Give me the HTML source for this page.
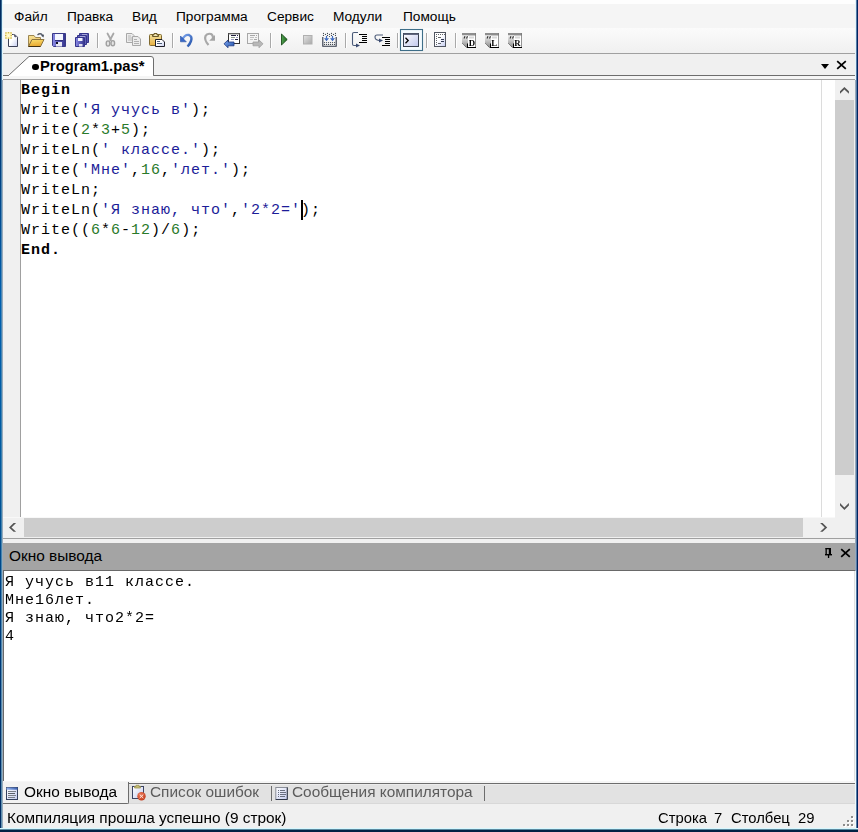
<!DOCTYPE html>
<html><head><meta charset="utf-8">
<style>
*{margin:0;padding:0;box-sizing:border-box}
html,body{width:858px;height:832px;overflow:hidden;background:#fff}
body{position:relative;font-family:"Liberation Sans",sans-serif;color:#000}
.a{position:absolute}
.ui{font-family:"Liberation Sans",sans-serif;font-size:13.7px;line-height:16px;white-space:pre;color:#000}
.p{font-size:15.4px;line-height:18px}
.mono{font-family:"Liberation Mono",monospace;font-size:15px;letter-spacing:1px;line-height:20px;white-space:pre}
.b{font-weight:bold}
.s{color:#1c1c98}
.n{color:#2a7a2a}
svg{position:absolute;overflow:visible}
</style></head><body>

<!-- top strip -->
<div class="a" style="left:0;top:0;width:858px;height:4px;background:#fefefe"></div>
<!-- menu bar -->
<div class="a" style="left:0;top:4px;width:858px;height:24px;background:#f5f5f5"></div>
<div class="a ui" style="left:14px;top:9px">Файл</div>
<div class="a ui" style="left:67px;top:9px">Правка</div>
<div class="a ui" style="left:132px;top:9px">Вид</div>
<div class="a ui" style="left:176px;top:9px">Программа</div>
<div class="a ui" style="left:267px;top:9px">Сервис</div>
<div class="a ui" style="left:333px;top:9px">Модули</div>
<div class="a ui" style="left:403px;top:9px">Помощь</div>

<!-- toolbar -->
<div class="a" style="left:0;top:28px;width:858px;height:25px;background:linear-gradient(#fbfbfb,#f0f0f0)"></div>
<svg width="858" height="54" style="left:0;top:0;will-change:transform">
<defs>
<linearGradient id="gPage" x1="0" y1="0" x2="1" y2="1"><stop offset="0" stop-color="#ffffff"/><stop offset="0.45" stop-color="#ffffff"/><stop offset="1" stop-color="#c4ccf0"/></linearGradient>
<linearGradient id="gFold" x1="0" y1="0" x2="0.3" y2="1"><stop offset="0" stop-color="#f8e49a"/><stop offset="1" stop-color="#eec060"/></linearGradient>
<linearGradient id="gFront" x1="0" y1="0" x2="0.2" y2="1"><stop offset="0" stop-color="#fae070"/><stop offset="1" stop-color="#e8a830"/></linearGradient>
<linearGradient id="gDisk" x1="0" y1="0" x2="1" y2="0"><stop offset="0" stop-color="#8c8ce6"/><stop offset="0.5" stop-color="#5a5ab8"/><stop offset="1" stop-color="#34348a"/></linearGradient>
<linearGradient id="gClip" x1="0" y1="0" x2="0" y2="1"><stop offset="0" stop-color="#f0e0a0"/><stop offset="1" stop-color="#e8b040"/></linearGradient>
<linearGradient id="gBlue" x1="0" y1="0" x2="1" y2="1"><stop offset="0" stop-color="#80a8f0"/><stop offset="1" stop-color="#2050a8"/></linearGradient>
<linearGradient id="gGreen" x1="0" y1="0" x2="1" y2="0"><stop offset="0" stop-color="#50a050"/><stop offset="1" stop-color="#1e6a1e"/></linearGradient>
<linearGradient id="gStop" x1="0" y1="0" x2="1" y2="1"><stop offset="0" stop-color="#e4e4e4"/><stop offset="1" stop-color="#a8a8a8"/></linearGradient>
<linearGradient id="gWin" x1="0" y1="0" x2="1" y2="1"><stop offset="0" stop-color="#ffffff"/><stop offset="1" stop-color="#c0c8ee"/></linearGradient>
<linearGradient id="gDL" x1="0" y1="0" x2="0" y2="1"><stop offset="0" stop-color="#f0f0f0"/><stop offset="1" stop-color="#8c8c8c"/></linearGradient>
<g id="dlr">
<rect x="3" y="33" width="14" height="15" fill="#ffffff"/>
<rect x="3" y="33" width="14" height="2.5" fill="#8e8e8e"/>
<rect x="3" y="35.5" width="6" height="12" fill="url(#gDL)"/>
<rect x="10" y="36.5" width="5" height="2" fill="#d8d8d8"/>
<rect x="16.2" y="33" width="0.8" height="15" fill="#7a7a7a"/>
<rect x="8" y="47" width="9" height="1" fill="#000"/>
<rect x="8" y="43.5" width="1" height="4" fill="#000"/>
<path d="M3.3,43.3 L7.5,47.5" stroke="#000" stroke-width="1" stroke-dasharray="1,0.6"/>
<path d="M3,43 V48 H7.5 Z" fill="#f4f4f4"/>
<path d="M5,38.5 L6,36.2 M7.5,38.5 L8.5,36.2" stroke="#303030" stroke-width="1.1"/>
</g>
</defs>
<g fill="#a9a9a9">
<rect x="97" y="33" width="1" height="15"/><rect x="172" y="33" width="1" height="15"/><rect x="270" y="33" width="1" height="15"/>
<rect x="345" y="33" width="1" height="15"/><rect x="397" y="33" width="1" height="15"/><rect x="426" y="33" width="1" height="15"/><rect x="455" y="33" width="1" height="15"/>
</g>
<g fill="#ffffff">
<rect x="98" y="33" width="1" height="15"/><rect x="173" y="33" width="1" height="15"/><rect x="271" y="33" width="1" height="15"/>
<rect x="346" y="33" width="1" height="15"/><rect x="398" y="33" width="1" height="15"/><rect x="427" y="33" width="1" height="15"/><rect x="456" y="33" width="1" height="15"/>
</g>

<!-- New -->
<path d="M8.5,46.5 V34.5 H13.5 Q15.5,34.5 17.5,37.2 V46.5 Z" fill="url(#gPage)" stroke="#3c4056" stroke-width="1"/>
<path d="M14.3,35.3 L15.6,37.2" stroke="#3c4056" stroke-width="1.2"/>
<rect x="5" y="32" width="7" height="7" rx="1.5" fill="#fff6b8"/>
<g fill="#c4aa40"><rect x="5.3" y="32.3" width="1.3" height="1.3"/><rect x="7.9" y="32.1" width="1.2" height="1.2"/><rect x="10.4" y="32.3" width="1.3" height="1.3"/>
<rect x="5.1" y="34.9" width="1.2" height="1.2"/><rect x="10.6" y="34.9" width="1.2" height="1.2"/>
<rect x="5.3" y="37.4" width="1.3" height="1.3"/><rect x="7.9" y="37.6" width="1.2" height="1.2"/><rect x="10.4" y="37.4" width="1.3" height="1.3"/></g>
<rect x="7.5" y="34.5" width="2" height="2" fill="#fffbe0"/>

<!-- Open -->
<path d="M28.5,46.5 V35.5 H34 L35.5,37.5 H40.5 V39.5" fill="url(#gFold)" stroke="#9c8650" stroke-width="1"/>
<path d="M28.5,46.5 L32,39.5 H44 L40.5,46.5 Z" fill="url(#gFront)" stroke="#8c7440" stroke-width="1"/>
<path d="M28.5,46.5 H40.5" stroke="#403010" stroke-width="1"/>
<path d="M37.5,35 Q40,32.5 42.5,35" fill="none" stroke="#505868" stroke-width="1.2"/>
<path d="M41,35.5 L44,34.5 L43.5,37.5 Z" fill="#404858"/>

<!-- Save -->
<path d="M52.5,33.5 H65.5 V46.5 H53.5 L52.5,45.5 Z" fill="url(#gDisk)" stroke="#3a3a88" stroke-width="1"/>
<rect x="55" y="34" width="8" height="6" fill="#f4f6ff"/>
<rect x="55" y="40" width="8" height="1" fill="#30307a"/>
<rect x="56" y="42" width="6" height="4.5" fill="#e8e8f4"/>
<rect x="56" y="42" width="2" height="2" fill="#101020"/>

<!-- Save all -->
<path d="M79.5,33.5 H88.5 V42.5 H79.5 Z" fill="#5858b0" stroke="#34348a" stroke-width="1"/>
<rect x="82" y="34.5" width="5" height="1.2" fill="#f0f0ff"/>
<path d="M77.5,35.5 H86.5 V44.5 H77.5 Z" fill="#6060b8" stroke="#34348a" stroke-width="1"/>
<rect x="80" y="36.5" width="5" height="1.2" fill="#f0f0ff"/>
<path d="M75.5,37.5 H84.5 V46.5 H75.5 Z" fill="url(#gDisk)" stroke="#34348a" stroke-width="1"/>
<rect x="78" y="38" width="4.5" height="3" fill="#f4f6ff"/>
<rect x="79" y="44" width="3.5" height="2.5" fill="#e0e0f0"/>

<!-- Cut -->
<path d="M107.5,33.5 L111,40 M113.5,33.5 L110,40" stroke="#a8a8a8" stroke-width="1.8" stroke-linecap="round"/>
<ellipse cx="108" cy="43.5" rx="1.8" ry="2.6" fill="#e4e4e4" stroke="#a0a0a0" stroke-width="1.4"/>
<ellipse cx="112.8" cy="43.2" rx="1.8" ry="2.6" fill="#e4e4e4" stroke="#a0a0a0" stroke-width="1.4"/>

<!-- Copy -->
<path d="M126.5,33.5 H132 L134,35.5 V42.5 H126.5 Z" fill="#ececec" stroke="#a8a8a8" stroke-width="1"/>
<g fill="#b8b8b8"><rect x="128" y="35.5" width="3" height="1"/><rect x="128" y="37.5" width="4" height="1"/><rect x="128" y="39.5" width="4" height="1"/></g>
<path d="M132.5,36.5 H138 L140.5,39 V45.5 H132.5 Z" fill="#ececec" stroke="#a8a8a8" stroke-width="1"/>
<g fill="#b0b0b0"><rect x="134" y="39" width="3" height="1"/><rect x="134" y="41" width="5" height="1"/><rect x="134" y="43" width="5" height="1"/></g>

<!-- Paste -->
<rect x="149.5" y="34.5" width="12" height="11" rx="1" fill="url(#gClip)" stroke="#806a30" stroke-width="1"/>
<path d="M152.5,36.5 V35 H154 V33.5 H157 V35 H158.5 V36.5 Z" fill="#f0e4b0" stroke="#6a5828" stroke-width="1"/>
<path d="M155.5,39.5 H162 L164.5,42 V46.5 H155.5 Z" fill="url(#gPage)" stroke="#202028" stroke-width="1"/>
<g fill="#50607a"><rect x="157" y="41" width="3" height="1"/><rect x="157" y="43" width="5" height="1"/></g>

<!-- Undo -->
<path d="M182,40 Q185,34 189,35 Q192.5,36.5 191,41 Q190,44 187.5,46.5" fill="none" stroke="url(#gBlue)" stroke-width="2.4"/>
<path d="M180.5,36 V41.8 H186.3 Z" fill="#3868c8" stroke="#2850a0" stroke-width="0.6"/>

<!-- Redo -->
<path d="M208.5,45 Q204,40 205.5,36 Q207,33 211,34 Q213,35 213,38" fill="none" stroke="#a8a8a8" stroke-width="2.2"/>
<path d="M215,35 V40.8 H209.2 Z" fill="#a4a4a4"/>

<!-- Nav back -->
<rect x="228.5" y="33.5" width="11" height="10" fill="#ffffff" stroke="#303030" stroke-width="1"/>
<rect x="228.5" y="33.5" width="11" height="1" fill="#909090"/>
<rect x="231" y="35" width="5" height="1" fill="#202040"/><rect x="237" y="35" width="1" height="1" fill="#202040"/>
<rect x="231" y="37" width="4" height="1" fill="#8a9a8a"/><rect x="236" y="37" width="2" height="1" fill="#9a9ac0"/>
<rect x="231" y="39" width="3" height="1" fill="#9a9ac0"/><rect x="235" y="39" width="3" height="1" fill="#202040"/>
<path d="M224,43.8 L228,40 V42 H234 V45.8 H228 V47.8 Z" fill="url(#gBlue)" stroke="#203880" stroke-width="0.8"/>

<!-- Nav forward -->
<rect x="247.5" y="33.5" width="11" height="10" fill="#f4f4f4" stroke="#a8a8a8" stroke-width="1"/>
<rect x="250" y="35" width="5" height="1" fill="#a8a8a8"/><rect x="256" y="35" width="1" height="1" fill="#a8a8a8"/>
<rect x="250" y="37" width="4" height="1" fill="#c0c0c0"/><rect x="255" y="37" width="2" height="1" fill="#c0c0c0"/>
<rect x="250" y="39" width="3" height="1" fill="#c8c8c8"/><rect x="254" y="39" width="3" height="1" fill="#a8a8a8"/>
<path d="M263,43.8 L259,40 V42 H253 V45.8 H259 V47.8 Z" fill="#b8b8b8" stroke="#a0a0a0" stroke-width="0.8"/>

<!-- Run -->
<path d="M281.5,34 V45 L287.2,39.5 Z" fill="url(#gGreen)" stroke="#1a4a1a" stroke-width="0.9" stroke-linejoin="round"/>

<!-- Stop -->
<rect x="303.5" y="35.5" width="8.5" height="8.5" fill="url(#gStop)" stroke="#b0b0b0" stroke-width="1"/>

<!-- Compile -->
<path d="M322.8,37 V46.3 H336.2 V37" fill="none" stroke="#303848" stroke-width="1.1"/>
<g fill="#404850">
<circle cx="323.5" cy="33.4" r="0.6"/><circle cx="327.5" cy="33.4" r="0.6"/><circle cx="331.5" cy="33.4" r="0.6"/><circle cx="335.5" cy="33.4" r="0.6"/>
<circle cx="325.5" cy="34.4" r="0.6"/><circle cx="329.5" cy="34.4" r="0.6"/><circle cx="333.5" cy="34.4" r="0.6"/>
<circle cx="323.5" cy="35.4" r="0.6"/><circle cx="327.5" cy="35.4" r="0.6"/><circle cx="331.5" cy="35.4" r="0.6"/><circle cx="335.5" cy="35.4" r="0.6"/>
<circle cx="329.5" cy="36.5" r="0.6"/>
<circle cx="324.5" cy="42.5" r="0.6"/><circle cx="326.5" cy="42.5" r="0.6"/><circle cx="328.5" cy="42.5" r="0.6"/><circle cx="330.5" cy="42.5" r="0.6"/><circle cx="332.5" cy="42.5" r="0.6"/><circle cx="334.5" cy="42.5" r="0.6"/>
<circle cx="324.5" cy="44.4" r="0.6"/><circle cx="326.5" cy="44.4" r="0.6"/><circle cx="328.5" cy="44.4" r="0.6"/><circle cx="330.5" cy="44.4" r="0.6"/><circle cx="332.5" cy="44.4" r="0.6"/><circle cx="334.5" cy="44.4" r="0.6"/>
</g>
<path d="M326.5,36 V38.5 M332.5,36 V38.5" stroke="#3a68c0" stroke-width="1.2"/>
<path d="M324,38.3 H329 L326.5,41.2 Z M330,38.3 H335 L332.5,41.2 Z" fill="#3a68c0"/>

<!-- Step into -->
<path d="M358,32.5 H354 Q352.5,32.5 352.5,34 V44 Q352.5,45.5 354,45.5 H357" fill="none" stroke="#4a5a78" stroke-width="1.1"/>
<path d="M356,43.5 L360,45.5 L356,47.5 Z" fill="#3a4a70"/>
<g fill="#000"><rect x="359" y="34" width="8" height="1"/><rect x="362" y="36" width="5" height="1"/><rect x="362" y="38" width="5" height="1"/><rect x="362" y="40" width="5" height="1"/><rect x="359" y="42" width="8" height="1"/></g>

<!-- Step over -->
<path d="M383,35 H377 Q375,35 375,37 Q375,40 379,40.5 H381" fill="none" stroke="#4a5a78" stroke-width="1.1"/>
<path d="M379,38.5 L383,40.5 L379,42.5 Z" fill="#3a4a70"/>
<g fill="#000"><rect x="382" y="37" width="8" height="1"/><rect x="385" y="39" width="5" height="1"/><rect x="385" y="41" width="5" height="1"/><rect x="385" y="43" width="5" height="1"/><rect x="382" y="45" width="8" height="1"/></g>

<!-- Output window (pressed) -->
<rect x="400.5" y="29.5" width="22" height="21" fill="#f4fbff" stroke="#3e6e88" stroke-width="1.1"/>
<rect x="403.5" y="33.5" width="15" height="13" fill="url(#gWin)" stroke="#384050" stroke-width="1"/>
<rect x="403.5" y="33.5" width="15" height="1.5" fill="#606880"/>
<path d="M405.5,37.8 L408.2,40.5 L405.5,43.2" fill="none" stroke="#000" stroke-width="1.3"/>

<!-- Format -->
<rect x="434.5" y="32.5" width="11" height="14" fill="url(#gPage)" stroke="#505560" stroke-width="1"/>
<g fill="#606468">
<rect x="436" y="34" width="1" height="1"/><rect x="438" y="34" width="1" height="1"/><rect x="440" y="34" width="1" height="1"/><rect x="442" y="34" width="1" height="1"/><rect x="444" y="34" width="1" height="1"/>
<rect x="436" y="36" width="1" height="1"/><rect x="436" y="38" width="1" height="1"/><rect x="436" y="40" width="1" height="1"/><rect x="436" y="42" width="1" height="1"/><rect x="436" y="44" width="1" height="1"/>
<rect x="438" y="37" width="3" height="1"/><rect x="438" y="43" width="3" height="1"/>
</g>
<g fill="#303850"><rect x="441" y="39" width="3" height="1"/><rect x="441" y="41" width="3" height="1"/></g>

<!-- D L R -->
<use href="#dlr" x="459" y="0"/>
<use href="#dlr" x="482" y="0"/>
<use href="#dlr" x="505" y="0"/>
<g font-family="Liberation Serif" font-weight="bold" font-size="8.8px" fill="#000">
<text x="468.7" y="46.3">D</text>
<text x="491.2" y="46.3">L</text>
<text x="514.2" y="46.3">R</text>
</g>
</svg>

<!-- line under toolbar -->
<div class="a" style="left:0;top:53px;width:858px;height:1px;background:#a0a0a0"></div>

<!-- tab strip -->
<div class="a" style="left:0;top:54px;width:858px;height:21px;background:#f0f0f0"></div>
<div class="a" style="left:0;top:75px;width:858px;height:1px;background:#6d6d6d"></div>
<div class="a" style="left:0;top:76px;width:858px;height:3px;background:#f5f5f5"></div>
<div class="a" style="left:0;top:79px;width:858px;height:1px;background:#a0a0a0"></div>
<!-- active tab -->
<svg width="858" height="30" style="left:0;top:50px">
  <path d="M8.5,25.5 L29,6.5 L151,6.5 Q153.5,6.5 153.5,9 L153.5,25.5" fill="#fff" stroke="#6d6d6d" stroke-width="1"/>
  <rect x="9" y="25" width="144" height="1" fill="#fff"/>
  <path d="M3,25.5 L9,25.5" stroke="#6d6d6d" stroke-width="1"/>
</svg>
<div class="a" style="left:32px;top:63.5px;width:6.5px;height:6.5px;border-radius:50%;background:#000"></div>
<div class="a ui b" style="left:40px;top:57px;font-size:14.8px;line-height:18px">Program1.pas*</div>
<!-- tab strip right buttons -->
<svg width="30" height="12" style="left:818px;top:59px">
  <path d="M3,5 L11,5 L7,10 Z" fill="#000"/>
  <path d="M19.2,2.2 L27.8,9.8 M27.8,2.2 L19.2,9.8" stroke="#000" stroke-width="1.8"/>
</svg>

<!-- editor -->
<div class="a" style="left:3px;top:80px;width:17px;height:437px;background:#f0f0f0"></div>
<div class="a" style="left:20px;top:80px;width:1px;height:437px;background:#a0a0a0"></div>
<div class="a" style="left:821px;top:80px;width:1px;height:437px;background:#dcdcdc"></div>
<div class="a" style="left:3px;top:517px;width:832px;height:1px;background:#f8f8f8"></div>
<div class="a mono" style="left:21px;top:81px"><span class="b">Begin</span>
Write(<span class="s">'Я учусь в'</span>);
Write(<span class="n">2</span>*<span class="n">3</span>+<span class="n">5</span>);
WriteLn(<span class="s">' классе.'</span>);
Write(<span class="s">'Мне'</span>,<span class="n">16</span>,<span class="s">'лет.'</span>);
WriteLn;
WriteLn(<span class="s">'Я знаю, что'</span>,<span class="s">'2*2='</span>);
Write((<span class="n">6</span>*<span class="n">6</span>-<span class="n">12</span>)/<span class="n">6</span>);
<span class="b">End.</span></div>
<!-- caret -->
<div class="a" style="left:301px;top:200px;width:2px;height:20px;background:#000"></div>

<!-- vertical scrollbar -->
<div class="a" style="left:835px;top:80px;width:20px;height:438px;background:#f0f0f0"></div>
<div class="a" style="left:835px;top:100px;width:19px;height:375px;background:#cdcdcd"></div>


<!-- horizontal scrollbar -->
<div class="a" style="left:3px;top:518px;width:852px;height:19px;background:#f0f0f0"></div>
<div class="a" style="left:24px;top:518px;width:779px;height:19px;background:#cdcdcd"></div>

<svg width="858" height="832" style="left:0;top:0;pointer-events:none"><g fill="#555"><path d="M844.4,86.9 L840,91.3 V93.8 L844.4,89.4 L848.9,93.8 V91.3 Z"/><path d="M844.4,509.9 L840,505.5 V503 L844.4,507.4 L848.9,503 V505.5 Z"/><path d="M9,527.4 L13.6,523.1 H16.1 L11.5,527.4 L16.1,531.7 H13.6 Z"/><path d="M827.2,527.4 L822.6,523.1 H820.1 L824.7,527.4 L820.1,531.7 H822.6 Z"/></g></svg>

<!-- splitter -->
<div class="a" style="left:3px;top:537px;width:852px;height:1px;background:#f0f0f0"></div>
<div class="a" style="left:3px;top:538px;width:852px;height:1px;background:#a0a0a0"></div>
<div class="a" style="left:3px;top:539px;width:852px;height:4px;background:#f0f0f0"></div>

<!-- output header -->
<div class="a" style="left:3px;top:543px;width:852px;height:27px;background:#a4a4a4"></div>
<div class="a ui p" style="left:9px;top:547px">Окно вывода</div>
<svg width="30" height="12" style="left:822px;top:547px">
  <rect x="3.5" y="1" width="1.3" height="6.5" fill="#000"/><rect x="6.8" y="1" width="2.2" height="6.5" fill="#000"/><rect x="3.5" y="1" width="5.5" height="1.3" fill="#000"/>
  <rect x="3" y="7" width="7" height="1.4" fill="#000"/><rect x="5.9" y="8" width="1.3" height="3" fill="#000"/>
  <path d="M19.2,2.2 L27.8,9.8 M27.8,2.2 L19.2,9.8" stroke="#000" stroke-width="1.8"/>
</svg>
<div class="a" style="left:3px;top:570px;width:852px;height:1px;background:#696969"></div>

<!-- output area -->
<div class="a" style="left:3px;top:570px;width:1px;height:211px;background:#696969"></div>
<div class="a mono" style="left:5px;top:574px;line-height:18px">Я учусь в11 классе.
Мне16лет.
Я знаю, что2*2=
4</div>

<!-- bottom tabs -->
<div class="a" style="left:3px;top:781px;width:852px;height:23px;background:#e2e2e2"></div>
<div class="a" style="left:3px;top:781px;width:852px;height:2px;background:#f6f6f6"></div>
<div class="a" style="left:3px;top:783px;width:852px;height:1px;background:#6d6d6d"></div>
<div class="a" style="left:3px;top:784px;width:852px;height:1px;background:#ececec"></div>
<div class="a" style="left:3px;top:803px;width:852px;height:1px;background:#d8d8d8"></div>
<div class="a" style="left:3px;top:782px;width:126px;height:22px;background:#f2f2f2;border-right:1px solid #6d6d6d;border-bottom:1px solid #6d6d6d;border-bottom-right-radius:2px"></div>
<svg width="858" height="24" style="left:0;top:780px">
<defs>
<linearGradient id="gOutT" x1="0" y1="0" x2="1" y2="0"><stop offset="0" stop-color="#90b0ee"/><stop offset="1" stop-color="#3a60b0"/></linearGradient>
<linearGradient id="gOutB" x1="0" y1="0" x2="1" y2="1"><stop offset="0" stop-color="#ffffff"/><stop offset="1" stop-color="#c4ccf0"/></linearGradient>
<radialGradient id="gRed" cx="0.4" cy="0.35" r="0.7"><stop offset="0" stop-color="#f08060"/><stop offset="1" stop-color="#c03818"/></radialGradient>
</defs>
<!-- output icon -->
<rect x="6.5" y="7.5" width="11" height="12" fill="url(#gOutB)" stroke="#34405c" stroke-width="1"/>
<rect x="6.5" y="7.5" width="11" height="2.2" fill="url(#gOutT)"/>
<g fill="#7a7f88"><rect x="8" y="11" width="8" height="1"/><rect x="8" y="13" width="7" height="1" fill="#5a6068"/><rect x="8" y="15" width="8" height="1"/><rect x="8" y="17" width="7" height="1"/></g>
<!-- errors icon -->
<rect x="132.5" y="6.5" width="11" height="12" fill="url(#gOutB)" stroke="#3c4462" stroke-width="1"/>
<path d="M134.5,8 V6.5 H136 V5.3 H139 V6.5 H140.5 V8 Z" fill="#c4bc74" stroke="#a09650" stroke-width="0.8"/>
<circle cx="141.5" cy="16.3" r="4.2" fill="url(#gRed)"/>
<path d="M139.7,14.5 L143.3,18.1 M143.3,14.5 L139.7,18.1" stroke="#ffe8e0" stroke-width="1"/>
<!-- messages icon -->
<rect x="275.8" y="7.5" width="11.5" height="12" fill="url(#gOutB)" stroke="#8a8e98" stroke-width="1"/>
<path d="M287.3,7.5 V19.5 H275.8" fill="none" stroke="#303848" stroke-width="1"/>
<g fill="#6a7080"><rect x="278" y="10" width="1" height="1"/><rect x="278" y="12" width="1" height="1"/><rect x="278" y="14" width="1" height="1"/><rect x="278" y="16" width="1" height="1"/>
<rect x="280" y="10" width="5" height="1"/><rect x="280" y="12" width="6" height="1"/><rect x="280" y="14" width="6" height="1"/><rect x="280" y="16" width="5" height="1"/></g>
</svg>
<div class="a ui p" style="left:24px;top:783px">Окно вывода</div>
<div class="a ui p" style="left:150px;top:783px;color:#5c5c5c">Список ошибок</div>
<div class="a" style="left:271px;top:786px;width:1px;height:15px;background:#6d6d6d"></div>
<div class="a ui p" style="left:292px;top:783px;color:#5c5c5c">Сообщения компилятора</div>
<div class="a" style="left:484px;top:786px;width:1px;height:15px;background:#6d6d6d"></div>

<!-- status bar -->
<div class="a" style="left:3px;top:804px;width:852px;height:25px;background:#f0f0f0"></div>
<div class="a ui p" style="left:7px;top:808.5px">Компиляция прошла успешно (9 строк)</div>
<div class="a ui p" style="left:658px;top:808.5px;font-size:14.8px">Строка</div>
<div class="a ui p" style="left:714px;top:808.5px;font-size:14.8px">7</div>
<div class="a ui p" style="left:731px;top:808.5px;font-size:14.8px">Столбец</div>
<div class="a ui p" style="left:798px;top:808.5px;font-size:14.8px">29</div>

<svg width="20" height="16" style="left:839px;top:813px"><g fill="#ffffff"><rect x="13" y="4" width="2" height="2"/><rect x="9" y="8" width="2" height="2"/><rect x="13" y="8" width="2" height="2"/><rect x="5" y="12" width="2" height="2"/><rect x="9" y="12" width="2" height="2"/><rect x="13" y="12" width="2" height="2"/></g><g fill="#8c8c8c"><rect x="12" y="3" width="2" height="2"/><rect x="8" y="7" width="2" height="2"/><rect x="12" y="7" width="2" height="2"/><rect x="4" y="11" width="2" height="2"/><rect x="8" y="11" width="2" height="2"/><rect x="12" y="11" width="2" height="2"/></g></svg>
<!-- window frame -->
<div class="a" style="left:0;top:0;width:1px;height:832px;background:linear-gradient(#002a60,#003060 6%,#003068 12%,#0060b0 36%,#005aa0 55%,#003a78 78%,#002a60)"></div>
<div class="a" style="left:1px;top:0;width:1px;height:832px;background:linear-gradient(#3a6890,#5080a8 12%,#4a88b8 36%,#3a80b0 55%,#6090b0)"></div>
<div class="a" style="left:2px;top:0;width:1px;height:832px;background:#98aabb"></div>
<div class="a" style="left:2px;top:0;width:1px;height:80px;background:#e0f6fc"></div>
<div class="a" style="left:855px;top:0;width:1px;height:832px;background:#9aaabb"></div>
<div class="a" style="left:855px;top:0;width:1px;height:80px;background:#e4f4fa"></div>
<div class="a" style="left:855px;top:571px;width:1px;height:258px;background:#eefafc"></div>
<div class="a" style="left:854px;top:571px;width:1px;height:210px;background:#e0e0e0"></div>
<div class="a" style="left:856px;top:0;width:1px;height:832px;background:#557aa6"></div>
<div class="a" style="left:857px;top:0;width:1px;height:832px;background:#002460"></div>
<div class="a" style="left:0;top:828px;width:858px;height:1px;background:#d8f8ff"></div>
<div class="a" style="left:0;top:829px;width:858px;height:1px;background:#5a8aa0"></div>
<div class="a" style="left:0;top:830px;width:858px;height:2px;background:#002244"></div>

</body></html>
